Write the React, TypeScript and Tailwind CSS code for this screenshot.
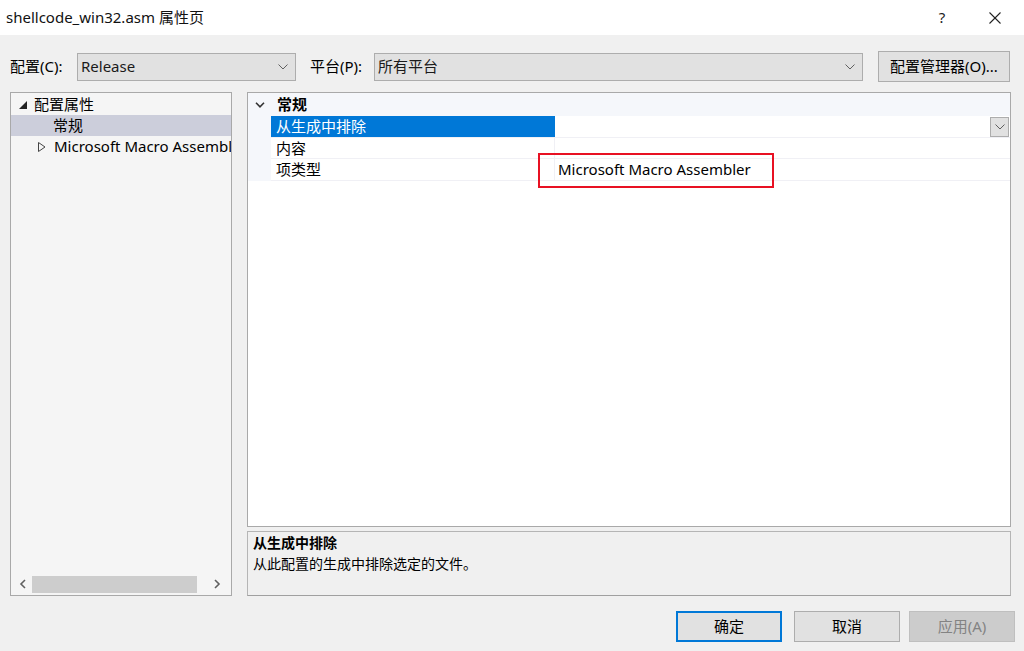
import React from "react";

const font = { fontFamily: '"Noto Sans", "Noto Sans CJK SC", sans-serif' };

function Chevron({ className = "" }: { className?: string }) {
  return (
    <svg width="10" height="6" viewBox="0 0 10 6" className={className}>
      <polyline points="0.5,0.5 5,5 9.5,0.5" fill="none" stroke="#606060" strokeWidth="1" />
    </svg>
  );
}

function Select({ value, w }: { value: string; w: string }) {
  return (
    <div className={`${w} h-[28px] border border-[#adadad] bg-[#e1e1e1] flex items-center justify-between pl-[3px] pr-[7px]`}>
      <span className="text-[15px] text-[#1a1a1a]">{value}</span>
      <Chevron />
    </div>
  );
}

export default function App() {
  return (
    <div className="relative w-[1024px] h-[651px] flex flex-col bg-[#f0f0f0] text-black overflow-hidden" style={font}>
      {/* Title bar */}
      <div className="h-[35px] bg-white flex items-center justify-between shrink-0">
        <span className="pl-[6px] text-[15px] text-[#111]">shellcode_win32.asm 属性页</span>
        <div className="flex items-center">
          <span className="w-[46px] text-center text-[15px] text-[#222]">?</span>
          <span className="w-[12px]" />
          <svg width="12" height="12" viewBox="0 0 12 12" className="mr-[23px] ml-[12px]">
            <line x1="0.5" y1="0.5" x2="11.5" y2="11.5" stroke="#222" strokeWidth="1.1" />
            <line x1="11.5" y1="0.5" x2="0.5" y2="11.5" stroke="#222" strokeWidth="1.1" />
          </svg>
        </div>
      </div>

      {/* Body */}
      <div className="flex-1 flex flex-col pt-[16px] pl-[10px] pr-[13px]">
        {/* Top row */}
        <div className="flex items-center h-[31px]">
          <span className="text-[15px] w-[67px]">配置(C):</span>
          <Select value="Release" w="w-[219px]" />
          <span className="text-[15px] ml-[14px] w-[64px]">平台(P):</span>
          <Select value="所有平台" w="w-[489px]" />
          <div className="ml-[15px] w-[132px] h-[31px] border border-[#adadad] bg-[#e1e1e1] flex items-center justify-center text-[15px]">
            配置管理器(O)...
          </div>
        </div>

        {/* Panels */}
        <div className="flex mt-[10px] h-[504px]">
          {/* Left tree */}
          <div className="w-[222px] h-full border border-[#a9a9a9] bg-[#f5f5f5] flex flex-col overflow-hidden">
            <div className="flex-1 pt-[1px] text-[15px]">
              <div className="h-[21px] flex items-center">
                <svg width="8" height="8" viewBox="0 0 8 8" className="ml-[8px] mr-[7px]">
                  <polygon points="8,0 8,8 0,8" fill="#222" />
                </svg>
                <span>配置属性</span>
              </div>
              <div className="h-[21px] flex items-center bg-[#cccedb] pl-[42px]">常规</div>
              <div className="h-[21px] flex items-center whitespace-nowrap">
                <svg width="8" height="10" viewBox="0 0 8 10" className="ml-[27px] mr-[8px] shrink-0">
                  <polygon points="0.5,0.5 7,5 0.5,9.5" fill="none" stroke="#444" strokeWidth="1" />
                </svg>
                <span>Microsoft Macro Assembler</span>
              </div>
            </div>
            <div className="h-[20px] flex items-center mb-[1px]">
              <svg width="8" height="10" viewBox="0 0 8 10" className="ml-[8px]">
                <polyline points="6,1 2,5 6,9" fill="none" stroke="#606060" strokeWidth="1.6" />
              </svg>
              <div className="ml-[5px] w-[165px] h-[17px] bg-[#cdcdcd]" />
              <svg width="8" height="10" viewBox="0 0 8 10" className="ml-[16px]">
                <polyline points="2,1 6,5 2,9" fill="none" stroke="#606060" strokeWidth="1.6" />
              </svg>
            </div>
          </div>

          {/* Right */}
          <div className="ml-[15px] flex-1 flex flex-col">
            <div className="h-[435px] border border-[#a9a9a9] bg-white flex flex-col">
              <div className="flex">
                <div className="w-[23px] bg-[#f5f7fb] h-[88px] flex justify-center pt-[9px]">
                  <svg width="10" height="6" viewBox="0 0 10 6">
                    <polyline points="1,0.8 5,4.8 9,0.8" fill="none" stroke="#333" strokeWidth="1.6" />
                  </svg>
                </div>
                <div className="flex-1 flex flex-col text-[15px]">
                  <div className="h-[23px] bg-[#f5f7fb] flex items-center pl-[6px] font-bold">常规</div>
                  <div className="h-[22px] flex border-b border-[#f0f0f5]">
                    <div className="w-[284px] bg-[#0078d7] text-white flex items-center pl-[5px]">从生成中排除</div>
                    <div className="flex-1 flex justify-end items-center pr-[1px]">
                      <div className="w-[19px] h-[20px] border border-[#adadad] bg-[#e1e1e1] flex items-center justify-center">
                        <Chevron />
                      </div>
                    </div>
                  </div>
                  <div className="h-[21px] flex border-b border-[#f0f0f5]">
                    <div className="w-[284px] flex items-center pl-[5px] border-r border-[#f0f0f5]">内容</div>
                    <div className="flex-1" />
                  </div>
                  <div className="h-[22px] flex border-b border-[#f0f0f5]">
                    <div className="w-[284px] flex items-center pl-[5px] border-r border-[#f0f0f5]">项类型</div>
                    <div className="flex-1 flex items-center pl-[3px]">Microsoft Macro Assembler</div>
                  </div>
                </div>
              </div>
            </div>
            <div className="mt-[4px] h-[65px] border border-[#b5b5b5] border-b-[#a0a0a0] bg-[#f0f0f0] px-[5px] text-[14px] leading-[21px]">
              <div className="font-bold">从生成中排除</div>
              <div>从此配置的生成中排除选定的文件。</div>
            </div>
          </div>
        </div>

        {/* Buttons */}
        <div className="flex justify-end mt-[15px] mr-[-4px]">
          <div className="w-[106px] h-[31px] border-2 border-[#0078d7] bg-[#e1e1e1] flex items-center justify-center text-[15px]">确定</div>
          <div className="ml-[12px] w-[106px] h-[31px] border border-[#adadad] bg-[#e1e1e1] flex items-center justify-center text-[15px]">取消</div>
          <div className="ml-[9px] w-[106px] h-[31px] border border-[#bfbfbf] bg-[#cccccc] flex items-center justify-center text-[15px] text-[#838383]">应用(A)</div>
        </div>
      </div>

      {/* Red highlight box overlay */}
      <div className="absolute left-[538px] top-[153px] w-[236px] h-[35px] border-2 border-[#e81123] pointer-events-none" />
    </div>
  );
}
